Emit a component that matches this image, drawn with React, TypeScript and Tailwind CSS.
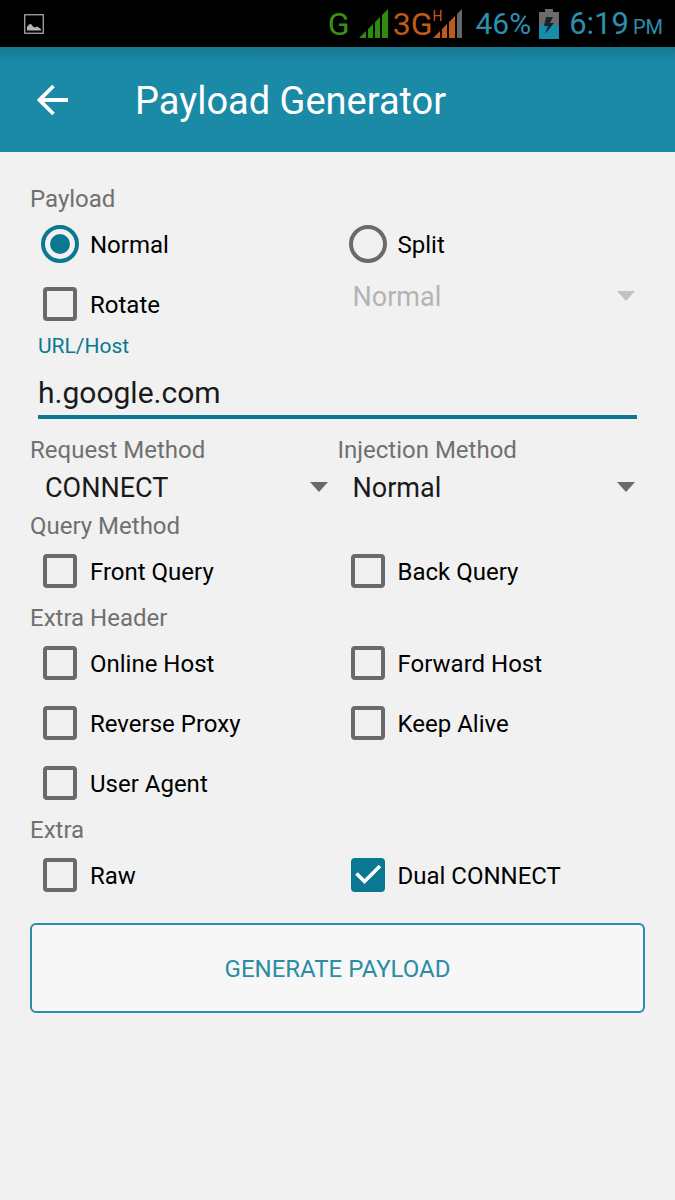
import React, { useState } from 'react';

interface OptionProps {
  label: string;
  defaultChecked?: boolean;
}

const CheckOption: React.FC<OptionProps> = ({ label, defaultChecked }) => (
  <label className="flex h-15 items-center text-2xl text-black">
    <span className="grid w-15 shrink-0 place-items-center">
      <input
        type="checkbox"
        defaultChecked={defaultChecked}
        className="peer col-start-1 row-start-1 size-[34px] appearance-none rounded-[4px] border-4 border-[#6a6a6a] checked:border-[#0b7892] checked:bg-[#0b7892]"
      />
      <svg
        viewBox="0 0 34 34"
        aria-hidden="true"
        className="pointer-events-none invisible col-start-1 row-start-1 size-[34px] peer-checked:visible"
      >
        <path d="M5.5 15.5L13.5 23.5L29 8" fill="none" stroke="#fff" strokeWidth="3.6" />
      </svg>
    </span>
    <span className="pt-0.5">{label}</span>
  </label>
);

const RadioOption: React.FC<OptionProps> = ({ label, defaultChecked }) => (
  <label className="flex h-15 items-center text-2xl text-black">
    <span className="grid w-15 shrink-0 place-items-center">
      <input
        type="radio"
        name="payload"
        defaultChecked={defaultChecked}
        className="peer col-start-1 row-start-1 size-[38px] appearance-none rounded-full border-4 border-[#6a6a6a] checked:border-[#0b7892]"
      />
      <span className="pointer-events-none invisible col-start-1 row-start-1 size-5 rounded-full bg-[#0b7892] peer-checked:visible" />
    </span>
    <span className="pt-0.5">{label}</span>
  </label>
);

interface SpinnerProps {
  id: string;
  label?: string;
  options: string[];
  disabled?: boolean;
}

const Spinner: React.FC<SpinnerProps> = ({ id, label, options, disabled }) => (
  <div>
    {label && (
      <label htmlFor={id} className="block h-8 text-2xl leading-[34px] text-[#707070]">
        {label}
      </label>
    )}
    <div className="grid items-center">
      <select
        id={id}
        disabled={disabled}
        aria-label={label ? undefined : 'Split mode'}
        className="col-start-1 row-start-1 h-11 w-full appearance-none bg-transparent pt-0.5 pr-10 pl-[15px] text-[27px] text-[#1a1a1a] disabled:text-[#b4b4b4] disabled:opacity-100"
      >
        {options.map((option) => (
          <option key={option}>{option}</option>
        ))}
      </select>
      <svg
        viewBox="0 0 18 10"
        aria-hidden="true"
        className={`pointer-events-none col-start-1 row-start-1 mr-[10px] h-[10px] w-[18px] justify-self-end ${
          disabled ? 'text-[#c2c2c2]' : 'text-[#6a6a6a]'
        }`}
      >
        <path d="M0 0H18L9 10Z" fill="currentColor" />
      </svg>
    </div>
  </div>
);

interface OptionGroupProps {
  title: string;
  children: React.ReactNode;
}

const OptionGroup: React.FC<OptionGroupProps> = ({ title, children }) => (
  <section>
    <h2 className="h-8 text-2xl leading-[34px] text-[#707070]">{title}</h2>
    <div className="grid grid-cols-2">{children}</div>
  </section>
);

const StatusBar: React.FC = () => (
  <div className="flex h-[47px] items-center bg-black pr-3 pl-6 text-[#2b8fae]">
    <svg viewBox="0 0 20 20" className="size-5" aria-hidden="true">
      <rect x="0.75" y="0.75" width="18.5" height="18.5" fill="none" stroke="#b5b5b5" strokeWidth="1.2" />
      <path d="M3 16.5V13L5 10.5L7 10L9 12.5L11 13.5L13 12.5L17 15V16.5Z" fill="#b5b5b5" />
    </svg>
    <div className="ml-auto flex items-center">
      <span className="text-[32px] leading-none text-[#35911a]">G</span>
      <svg viewBox="0 0 31 30" className="ml-2 h-[30px] w-[31px]" aria-hidden="true">
        <path d="M1 29L8 22V29ZM10 29V20L15 15V29ZM17 29V13L22 8V29ZM24 29V6L30 0V29Z" fill="#2d8c10" />
      </svg>
      <span className="ml-1 text-[32px] leading-none text-[#c05a1a]">3G</span>
      <span className="relative">
        <svg viewBox="0 0 31 30" className="h-[30px] w-[31px]" aria-hidden="true">
          <path d="M1 29L8 22V29ZM10 29V20L15 15V29ZM17 29V13L23 7V29Z" fill="#c05a1a" />
          <path d="M25 29V5L30 0V29Z" fill="#666" />
        </svg>
        <span className="absolute top-0 left-0 text-sm leading-none text-[#c05a1a]">H</span>
      </span>
      <span className="ml-3 text-3xl">46%</span>
      <svg viewBox="0 0 20 31" className="ml-2 h-[31px] w-5" aria-hidden="true">
        <path d="M6 1H14V4H20V31H0V4H6Z" fill="#6b6b6b" />
        <path d="M0 17H20V31H0Z" fill="#178baa" />
        <path d="M7 9H14L11 15H15L6 26L9 18H5Z" fill="#15252b" />
      </svg>
      <span className="ml-2.5 flex items-baseline gap-1">
        <span className="text-[31px] leading-none">6:19</span>
        <span className="text-xl leading-none">PM</span>
      </span>
    </div>
  </div>
);

export default function App() {
  const [host, setHost] = useState('h.google.com');

  return (
    <div className="min-h-screen bg-[#f1f1f1] font-['Roboto',sans-serif]">
      <StatusBar />

      <header className="flex h-[105px] items-center bg-[#1b8aa6] bg-linear-to-b from-[#167891] to-[#1b8aa6] to-15% pl-[37px] text-white">
        <button type="button" aria-label="Back">
          <svg viewBox="0 0 32 32" className="size-8" aria-hidden="true">
            <path d="M31 16H3M16.5 2L2.5 16L16.5 30" fill="none" stroke="currentColor" strokeWidth="3.8" />
          </svg>
        </button>
        <h1 className="ml-[66px] pt-1 text-[38px]">Payload Generator</h1>
      </header>

      <form className="px-[30px] pt-[30px]" onSubmit={(e) => e.preventDefault()}>
        <OptionGroup title="Payload">
          <RadioOption label="Normal" defaultChecked />
          <RadioOption label="Split" />
          <CheckOption label="Rotate" />
          <Spinner id="split-mode" options={['Normal']} disabled />
        </OptionGroup>

        <div className="px-2">
          <label htmlFor="host" className="block text-[21px] leading-6 text-[#0b7892]">
            URL/Host
          </label>
          <input
            id="host"
            type="text"
            value={host}
            onChange={(e) => setHost(e.target.value)}
            className="block h-[61px] w-full border-b-4 border-[#0b7892] bg-transparent pt-3 text-3xl text-[#1a1a1a] outline-none"
          />
        </div>

        <div className="mt-[14px] grid grid-cols-2">
          <Spinner id="request-method" label="Request Method" options={['CONNECT']} />
          <Spinner id="injection-method" label="Injection Method" options={['Normal']} />
        </div>

        <OptionGroup title="Query Method">
          <CheckOption label="Front Query" />
          <CheckOption label="Back Query" />
        </OptionGroup>

        <OptionGroup title="Extra Header">
          <CheckOption label="Online Host" />
          <CheckOption label="Forward Host" />
          <CheckOption label="Reverse Proxy" />
          <CheckOption label="Keep Alive" />
          <CheckOption label="User Agent" />
        </OptionGroup>

        <OptionGroup title="Extra">
          <CheckOption label="Raw" />
          <CheckOption label="Dual CONNECT" defaultChecked />
        </OptionGroup>

        <button
          type="submit"
          className="mt-[18px] h-[90px] w-full rounded-md border-2 border-[#2a8ca5] bg-[#f7f7f7] pt-0.5 text-2xl text-[#2a8ca5]"
        >
          GENERATE PAYLOAD
        </button>
      </form>
    </div>
  );
}
